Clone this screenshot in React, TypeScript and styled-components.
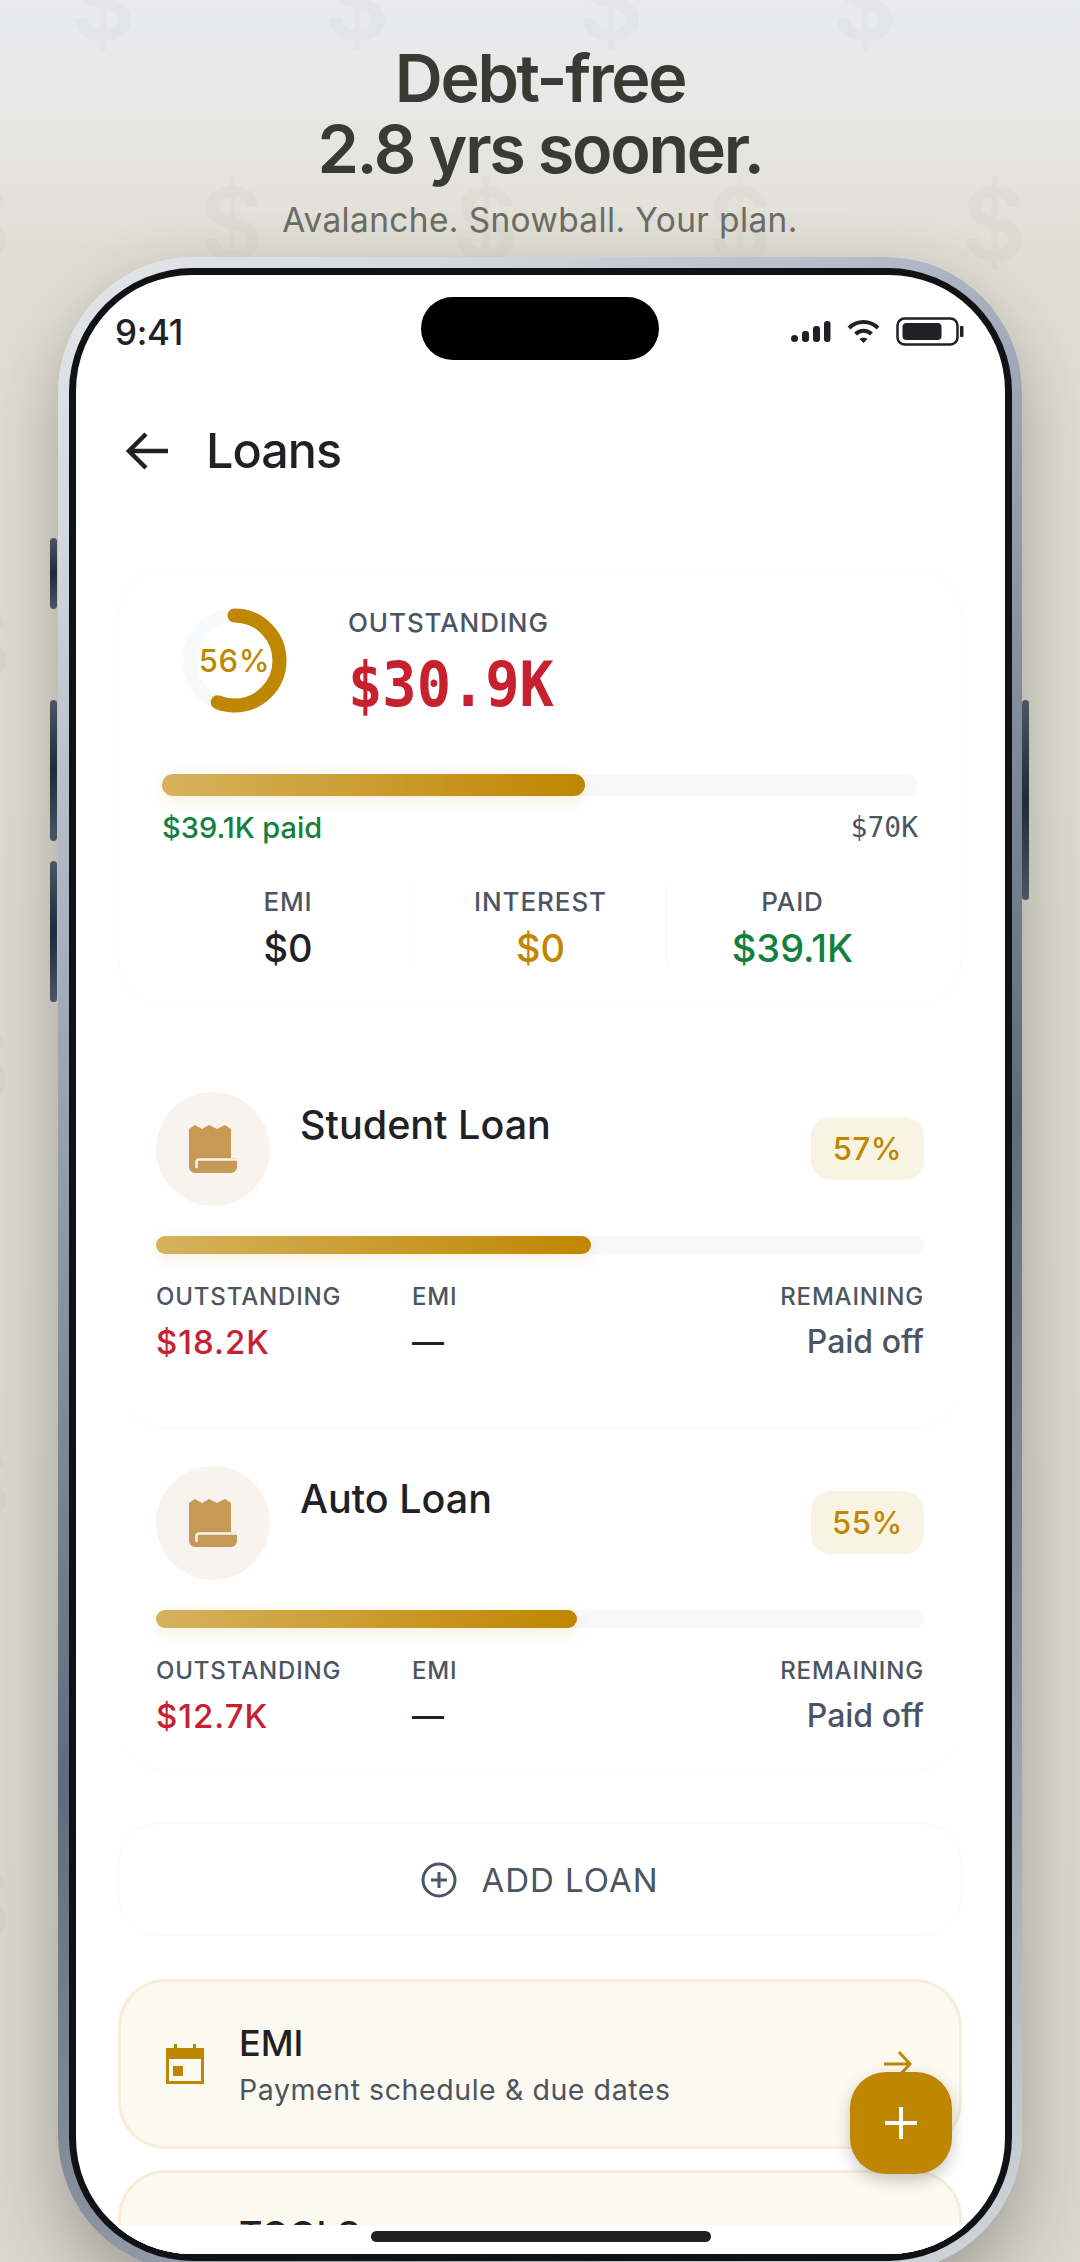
import { FC } from "react";
import styled, { createGlobalStyle } from "styled-components";

const GOLD = "#bf8600";
const RED = "#c8202f";
const GREEN = "#15803d";
const SLATE = "#4b5563";
const INK = "#1f2125";
const MONO = `"DejaVu Sans Mono", "Liberation Mono", monospace`;

const GlobalStyle = createGlobalStyle`
    * { box-sizing: border-box; }
    html, body {
        margin: 0;
        padding: 0;
        height: 2262px;
        overflow: hidden;
        font-family: Inter, "Noto Sans", sans-serif;
    }
`;

const Page = styled.div`
    position: relative;
    width: 1080px;
    height: 2262px;
    overflow: hidden;
    background: linear-gradient(180deg, #e9eaed 0, #e8e8e8 100px, #e0ded4 250px, #dcdad1 1000px, #d9d7ce 2262px);
`;

const Watermark = styled.svg`
    position: absolute;
    inset: 0;
    width: 1080px;
    height: 2262px;
    text {
        font-family: Inter, sans-serif;
        font-weight: 600;
        font-size: 100px;
        fill: rgba(60, 60, 60, 0.03);
        text-anchor: middle;
    }
`;

const Hero = styled.header`
    position: relative;
    height: 257px;
    padding-top: 43px;
    text-align: center;
`;

const Headline = styled.h1`
    margin: 0;
    font-size: 66.5px;
    line-height: 71px;
    font-weight: 600;
    letter-spacing: -0.035em;
    color: #3a3a34;
`;

const Tagline = styled.p`
    margin: 14px 0 0;
    font-size: 33.4px;
    line-height: 42px;
    letter-spacing: 0.012em;
    color: #6c6c63;
`;

const Phone = styled.div`
    position: relative;
    width: 964px;
    height: 2015px;
    margin-left: 58px;
    padding: 11px 10px 11px 11px;
    border-radius: 136px;
    background: linear-gradient(145deg, #e4e6ea 0%, #d5d8df 10%, #a9b0c0 25%, #5f6b7c 57%, #9fa5b0 82%, #d5d8de 100%);
    box-shadow: 0 30px 70px rgba(40, 38, 30, 0.32);
`;

const SideButton = styled.span<{ $top: number; $height: number; $right?: boolean }>`
    position: absolute;
    top: ${({ $top }) => $top}px;
    height: ${({ $height }) => $height}px;
    width: 7px;
    ${({ $right }) => ($right ? "right: -7px;" : "left: -8px;")}
    border-radius: 4px;
    background: linear-gradient(180deg, #4b5563, #1f2a3a 50%, #4b5563);
`;

const Bezel = styled.div`
    height: 100%;
    padding: 7px;
    background: #111216;
    border-radius: 124px;
`;

const Screen = styled.main`
    position: relative;
    height: 100%;
    overflow: hidden;
    background: #fff;
    border-radius: 116px;
`;

const Island = styled.div`
    position: absolute;
    top: 22px;
    left: 345px;
    width: 238px;
    height: 63px;
    border-radius: 32px;
    background: #000;
`;

const StatusBar = styled.div`
    display: flex;
    justify-content: space-between;
    align-items: center;
    height: 113px;
    padding: 0 41px 0 39px;
    color: ${INK};
`;

const Time = styled.span`
    font-size: 35px;
    font-weight: 500;
    letter-spacing: -0.01em;
`;

const StatusIcons = styled.div`
    display: flex;
    align-items: center;
    gap: 16px;
`;

const Title = styled.div`
    display: flex;
    align-items: center;
    gap: 38px;
    height: 125px;
    padding-left: 50px;
    font-size: 48.5px;
    font-weight: 500;
    letter-spacing: -0.02em;
    color: ${INK};
`;

const Content = styled.div`
    padding: 56px 43px 0 42px;
`;

const SummaryCard = styled.section`
    padding: 38px 43px 40px;
    border: 1px solid #fcfcfc;
    border-radius: 46px;
`;

const SummaryTop = styled.div`
    display: flex;
    align-items: flex-start;
    gap: 61px;
    padding-left: 20px;
`;

const Donut = styled.div`
    position: relative;
    display: flex;
    align-items: center;
    justify-content: center;
    width: 105px;
    height: 105px;
    flex: none;
    color: ${GOLD};
    font-size: 31px;
    font-weight: 500;
    letter-spacing: 0.02em;
    svg {
        position: absolute;
        inset: 0;
    }
`;

const Caption = styled.div<{ $size?: number }>`
    font-size: ${({ $size }) => $size ?? 26}px;
    line-height: 30px;
    font-weight: 500;
    letter-spacing: 0.035em;
    color: ${SLATE};
`;

const BigAmount = styled.div`
    margin-top: 10px;
    font-family: ${MONO};
    font-weight: 700;
    font-size: 57px;
    line-height: 72px;
    color: ${RED};
    transform: scaleY(1.08);
`;

const Track = styled.div<{ $height: number }>`
    height: ${({ $height }) => $height}px;
    border-radius: 12px;
    background: #f7f8f9;
`;

const Fill = styled.div`
    height: 100%;
    border-radius: 12px;
    background: linear-gradient(90deg, #d6b25e, ${GOLD});
    box-shadow: 0 4px 16px rgba(191, 134, 0, 0.14);
`;

const SummaryBar = styled.div`
    margin-top: 54px;
`;

const BarLegend = styled.div`
    display: flex;
    justify-content: space-between;
    align-items: center;
    margin-top: 14px;
    height: 34px;
`;

const PaidText = styled.span`
    font-size: 29px;
    font-weight: 500;
    color: ${GREEN};
`;

const TotalText = styled.span`
    font-family: ${MONO};
    font-size: 28px;
    color: ${SLATE};
`;

const Stats = styled.div`
    display: grid;
    grid-template-columns: repeat(3, 1fr);
    margin-top: 43px;
`;

const Stat = styled.div`
    display: flex;
    flex-direction: column;
    align-items: center;
    height: 78px;
    & + & {
        border-left: 1px solid #f4f5f6;
    }
`;

const StatValue = styled.div<{ $color: string }>`
    margin-top: 8px;
    font-size: 38px;
    line-height: 46px;
    font-weight: 500;
    color: ${({ $color }) => $color};
`;

const LoanList = styled.div`
    margin-top: 48px;
`;

const LoanCard = styled.article`
    height: 374px;
    padding: 38px 38px 0;
    border-radius: 46px;
    border-bottom: 1px solid #fafafa;
    &:last-child {
        height: 343px;
    }
`;

const LoanHead = styled.div`
    display: flex;
    align-items: flex-start;
    gap: 30px;
`;

const LoanIcon = styled.div`
    display: flex;
    align-items: center;
    justify-content: center;
    width: 114px;
    height: 114px;
    flex: none;
    border-radius: 50%;
    background: #f8f3ec;
`;

const LoanName = styled.h2`
    flex: 1;
    margin: 8px 0 0;
    font-size: 39.5px;
    line-height: 50px;
    font-weight: 500;
    color: ${INK};
`;

const Pill = styled.div`
    display: flex;
    align-items: center;
    justify-content: center;
    width: 113px;
    height: 63px;
    margin-top: 25px;
    border-radius: 20px;
    background: #f8f3e3;
    color: ${GOLD};
    font-size: 31px;
    font-weight: 500;
    letter-spacing: 0.02em;
`;

const LoanBar = styled.div`
    margin-top: 30px;
`;

const LoanFacts = styled.div`
    display: grid;
    grid-template-columns: repeat(3, 1fr);
    margin-top: 28px;
`;

const Fact = styled.div<{ $right?: boolean }>`
    text-align: ${({ $right }) => ($right ? "right" : "left")};
`;

const FactValue = styled.div<{ $color: string; $spaced?: boolean }>`
    margin-top: 10px;
    font-size: ${({ $spaced }) => ($spaced ? 33 : 32)}px;
    line-height: 40px;
    font-weight: 500;
    letter-spacing: ${({ $spaced }) => ($spaced ? "0.03em" : "0")};
    color: ${({ $color }) => $color};
`;

const AddLoan = styled.button`
    display: flex;
    align-items: center;
    justify-content: center;
    gap: 24px;
    width: 100%;
    height: 113px;
    margin-top: 52px;
    border: 1px solid #fafafa;
    border-radius: 40px;
    background: #fff;
    font-family: inherit;
    font-size: 33px;
    letter-spacing: 0.03em;
    color: ${SLATE};
`;

const LinkCard = styled.div`
    display: flex;
    align-items: center;
    gap: 34px;
    height: 170px;
    margin-top: 21px;
    padding: 0 47px 0 44px;
    border: 3px solid #f6eeda;
    border-radius: 48px;
    background: #fcf9f0;
`;

const FirstLink = styled(LinkCard)`
    margin-top: 43px;
`;

const LinkText = styled.div`
    flex: 1;
`;

const LinkTitle = styled.div`
    font-size: 36px;
    line-height: 46px;
    font-weight: 500;
    color: ${INK};
`;

const LinkSub = styled.div`
    margin-top: 6px;
    min-height: 36px;
    font-size: 28.5px;
    line-height: 36px;
    letter-spacing: 0.02em;
    color: ${SLATE};
`;

const HomeZone = styled.div`
    position: absolute;
    left: 0;
    right: 0;
    bottom: 0;
    height: 29px;
    background: #fff;
    display: flex;
    justify-content: center;
    padding-top: 6px;
`;

const HomeBar = styled.span`
    width: 340px;
    height: 11px;
    border-radius: 6px;
    background: ${INK};
`;

const Fab = styled.button`
    position: absolute;
    left: 774px;
    top: 1797px;
    display: flex;
    align-items: center;
    justify-content: center;
    width: 102px;
    height: 102px;
    padding: 0;
    border: 0;
    border-radius: 36px;
    background: ${GOLD};
    box-shadow: 0 6px 16px rgba(0, 0, 0, 0.22);
`;

const Signal = () => (
    <svg width="40" height="22" viewBox="0 0 40 22" fill={INK}>
        <rect x="0" y="14" width="7" height="7" rx="3.5" />
        <rect x="11" y="10" width="7" height="11" rx="3" />
        <rect x="22" y="5" width="7" height="16" rx="3" />
        <rect x="33" y="0" width="6.5" height="21" rx="3" />
    </svg>
);

const Wifi = () => (
    <svg width="33" height="24" viewBox="0 0 33 24" fill="none" stroke={INK} strokeWidth="4">
        <path d="M2 8 C10 0 23 0 31 8" />
        <path d="M8.5 14 C13 9.5 20 9.5 24.5 14" />
        <path d="M12.5 19 L16.5 23 L20.5 19 C18 17 15 17 12.5 19 Z" fill={INK} stroke="none" />
    </svg>
);

const Battery = () => (
    <svg width="68" height="29" viewBox="0 0 68 29">
        <rect x="1.5" y="1.5" width="60" height="26" rx="7" fill="none" stroke={INK} strokeWidth="2.5" />
        <rect x="6.5" y="6" width="39" height="17" rx="4" fill={INK} />
        <rect x="64" y="9" width="3.5" height="11" rx="1" fill={INK} />
    </svg>
);

const LoanGlyph = () => (
    <svg width="48" height="48" viewBox="0 0 48 48">
        <path
            d="M0 4 L6 0 L13 4 L20 0 L28 4 L36 0 L42 4 V33 H48 V42 a6 6 0 0 1 -6 6 H6 a6 6 0 0 1 -6 -6 Z"
            fill="#c69a56"
        />
        <path d="M48 34.5 H10 a2.5 2.5 0 0 0 -2.5 2.5 V42" fill="none" stroke="#f8f3ec" strokeWidth="2.5" strokeLinecap="round" />
    </svg>
);

const CalendarGlyph = () => (
    <svg width="40" height="40" viewBox="0 0 40 40" style={{ flex: "none" }} fill={GOLD}>
        <rect x="9" y="0" width="3" height="6" />
        <rect x="28" y="0" width="3" height="6" />
        <path fillRule="evenodd" d="M1 4 H39 V40 H1 Z M4 15 V37 H36 V15 Z" />
        <rect x="8" y="22" width="10" height="10" />
    </svg>
);

interface ILoan {
    name: string;
    percent: number;
    fill: number;
    outstanding: string;
}

const loans: ILoan[] = [
    { name: "Student Loan", percent: 57, fill: 56.6, outstanding: "$18.2K" },
    { name: "Auto Loan", percent: 55, fill: 54.8, outstanding: "$12.7K" },
];

const LoanRow: FC<{ loan: ILoan }> = ({ loan }) => (
    <LoanCard>
        <LoanHead>
            <LoanIcon>
                <LoanGlyph />
            </LoanIcon>
            <LoanName>{loan.name}</LoanName>
            <Pill>{loan.percent}%</Pill>
        </LoanHead>
        <LoanBar>
            <Track $height={18}>
                <Fill style={{ width: `${loan.fill}%` }} />
            </Track>
        </LoanBar>
        <LoanFacts>
            <Fact>
                <Caption $size={24}>OUTSTANDING</Caption>
                <FactValue $color={RED} $spaced>{loan.outstanding}</FactValue>
            </Fact>
            <Fact>
                <Caption $size={24}>EMI</Caption>
                <FactValue $color={INK}>—</FactValue>
            </Fact>
            <Fact $right>
                <Caption $size={24}>REMAINING</Caption>
                <FactValue $color={SLATE}>Paid off</FactValue>
            </Fact>
        </LoanFacts>
    </LoanCard>
);

const App: FC = () => {
    const radius = 45;
    const circumference = 2 * Math.PI * radius;

    return (
        <Page>
            <GlobalStyle />
            <Watermark>
                <defs>
                    <pattern id="dollars" width="508" height="420" patternUnits="userSpaceOnUse" x="0" y="-20">
                        <text x="103" y="60">$</text>
                        <text x="357" y="60">$</text>
                        <text x="232" y="280">$</text>
                        <text x="486" y="280">$</text>
                        <text x="-22" y="280">$</text>
                    </pattern>
                </defs>
                <rect width="1080" height="2262" fill="url(#dollars)" />
            </Watermark>
            <Hero>
                <Headline>Debt-free<br />2.8 yrs sooner.</Headline>
                <Tagline>Avalanche. Snowball. Your plan.</Tagline>
            </Hero>
            <Phone>
                <SideButton $top={281} $height={71} />
                <SideButton $top={443} $height={141} />
                <SideButton $top={604} $height={141} />
                <SideButton $right $top={443} $height={200} />
                <Bezel>
                    <Screen>
                        <Island />
                        <StatusBar>
                            <Time>9:41</Time>
                            <StatusIcons>
                                <Signal />
                                <Wifi />
                                <Battery />
                            </StatusIcons>
                        </StatusBar>
                        <Title>
                            <svg width="42" height="38" viewBox="0 0 42 38" fill="none" stroke={INK} strokeWidth="4.5">
                                <path d="M42 19 H4 M20 2 L3 19 L20 36" />
                            </svg>
                            Loans
                        </Title>
                        <Content>
                            <SummaryCard>
                                <SummaryTop>
                                    <Donut>
                                        <svg width="105" height="105" viewBox="0 0 105 105" fill="none" strokeWidth="14">
                                            <circle cx="52.5" cy="52.5" r={radius} stroke="#f8f9fa" />
                                            <circle
                                                cx="52.5"
                                                cy="52.5"
                                                r={radius}
                                                stroke={GOLD}
                                                strokeLinecap="round"
                                                strokeDasharray={`${circumference * 0.56} ${circumference}`}
                                                transform="rotate(-90 52.5 52.5)"
                                            />
                                        </svg>
                                        56%
                                    </Donut>
                                    <div>
                                        <Caption>OUTSTANDING</Caption>
                                        <BigAmount>$30.9K</BigAmount>
                                    </div>
                                </SummaryTop>
                                <SummaryBar>
                                    <Track $height={22}>
                                        <Fill style={{ width: "56%" }} />
                                    </Track>
                                    <BarLegend>
                                        <PaidText>$39.1K paid</PaidText>
                                        <TotalText>$70K</TotalText>
                                    </BarLegend>
                                </SummaryBar>
                                <Stats>
                                    <Stat>
                                        <Caption>EMI</Caption>
                                        <StatValue $color={INK}>$0</StatValue>
                                    </Stat>
                                    <Stat>
                                        <Caption>INTEREST</Caption>
                                        <StatValue $color={GOLD}>$0</StatValue>
                                    </Stat>
                                    <Stat>
                                        <Caption>PAID</Caption>
                                        <StatValue $color={GREEN}>$39.1K</StatValue>
                                    </Stat>
                                </Stats>
                            </SummaryCard>
                            <LoanList>
                                {loans.map((loan) => (
                                    <LoanRow key={loan.name} loan={loan} />
                                ))}
                            </LoanList>
                            <AddLoan>
                                <svg width="36" height="36" viewBox="0 0 36 36" fill="none" stroke={SLATE} strokeWidth="3">
                                    <circle cx="18" cy="18" r="16" />
                                    <path d="M18 10 V26 M10 18 H26" />
                                </svg>
                                ADD LOAN
                            </AddLoan>
                            <FirstLink>
                                <CalendarGlyph />
                                <LinkText>
                                    <LinkTitle>EMI</LinkTitle>
                                    <LinkSub>Payment schedule &amp; due dates</LinkSub>
                                </LinkText>
                                <svg width="28" height="26" viewBox="0 0 28 26" fill="none" stroke={GOLD} strokeWidth="3" style={{ flex: "none" }}>
                                    <path d="M0 13 H26 M15 1 L26 13 L15 25" />
                                </svg>
                            </FirstLink>
                            <LinkCard>
                                <CalendarGlyph />
                                <LinkText>
                                    <LinkTitle>TOOLS</LinkTitle>
                                    <LinkSub />
                                </LinkText>
                            </LinkCard>
                        </Content>
                        <Fab>
                            <svg width="34" height="34" viewBox="0 0 34 34" stroke="#fff" strokeWidth="4">
                                <path d="M17 1 V33 M1 17 H33" />
                            </svg>
                        </Fab>
                        <HomeZone>
                            <HomeBar />
                        </HomeZone>
                    </Screen>
                </Bezel>
            </Phone>
        </Page>
    );
};

export default App;
